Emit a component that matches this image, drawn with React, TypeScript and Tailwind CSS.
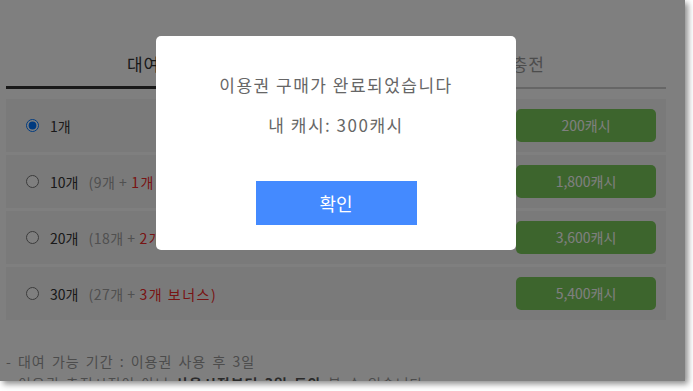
import React from 'react';

interface Plan {
  count: number;
  base?: number;
  bonus?: number;
  price: string;
}

const plans: Plan[] = [
  { count: 1, price: '200캐시' },
  { count: 10, base: 9, bonus: 1, price: '1,800캐시' },
  { count: 20, base: 18, bonus: 2, price: '3,600캐시' },
  { count: 30, base: 27, bonus: 3, price: '5,400캐시' },
];

const font = { fontFamily: '"Noto Sans CJK KR", "Noto Sans", sans-serif' };

const PlanRow: React.FC<{ plan: Plan; checked: boolean }> = ({ plan, checked }) => {
  return (
    <div className="flex h-[53px] items-center justify-between bg-[#f5f5f5] pl-[20px] pr-[10px]">
      <label className="flex items-center text-[14px] leading-[20px]">
        <input
          type="radio"
          name="plan"
          defaultChecked={checked}
          className="m-0 h-[13px] w-[13px]"
        />
        <span className="ml-[11px] text-[#333]">{plan.count}개</span>
        {plan.base !== undefined && (
          <>
            <span className="ml-[10px] tracking-[0.5px] text-[#a0a0a0]">({plan.base}개 +</span>
            <span className="ml-[4px] tracking-[1.5px] text-[#f02828]">{plan.bonus}개 보너스)</span>
          </>
        )}
      </label>
      <button className="flex h-[33px] w-[140px] items-center justify-center rounded-[5px] bg-[#7aca5a] text-[14px] text-white">
        {plan.price}
      </button>
    </div>
  );
};

const App: React.FC = () => {
  return (
    <div className="h-[391px] w-[693px] overflow-hidden bg-white" style={font}>
      <div className="relative h-[381px] w-[685px] overflow-hidden bg-white shadow-[3px_3px_6px_rgba(0,0,0,0.45)]">
        <div className="w-[660px] ml-[6px]">
          <div className="flex">
            <div className="flex-1 border-b-[3px] border-[#333] pb-[10px] pt-[52px] text-center text-[17px] leading-[24px] tracking-[1px] text-[#333]">
              대여권 구매
            </div>
            <div className="flex-1 border-b-2 border-[#ccc] pb-[11px] pt-[52px] text-center text-[17px] leading-[24px] tracking-[1px] text-[#999]">
              이용권 충전
            </div>
          </div>

          <div className="mt-[10px] flex flex-col gap-[3px]">
            {plans.map((p, i) => (
              <PlanRow key={p.count} plan={p} checked={i === 0} />
            ))}
          </div>

          <div className="mt-[30px] text-[14px] leading-[22px] tracking-[1px] [word-spacing:2px] text-[#999]">
            <p>- 대여 가능 기간 : 이용권 사용 후 3일</p>
            <p>
              - 이용권 충전시점이 아닌 <b className="text-[#555]">사용시점부터 3일 동안</b> 볼 수 있습니다
            </p>
          </div>
        </div>

        <div className="absolute inset-0 bg-black/50" />

        <div className="absolute left-[156px] top-[36px] flex h-[214px] w-[360px] flex-col items-center rounded-[5px] bg-white pt-[37px] text-[#666]">
          <p className="text-[17px] leading-[24px] tracking-[1.5px]">이용권 구매가 완료되었습니다</p>
          <p className="mt-[16px] text-[17px] leading-[24px] tracking-[1.5px]">내 캐시: 300캐시</p>
          <button className="mt-[44px] h-[44px] w-[161px] bg-[#448aff] text-[18px] text-white">
            확인
          </button>
        </div>
      </div>
    </div>
  );
};

export default App;
